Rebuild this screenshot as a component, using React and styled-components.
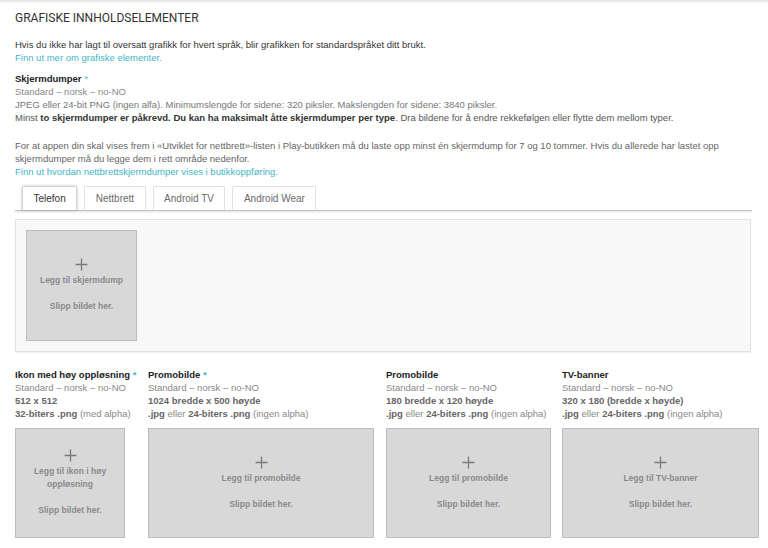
import React from "react";
import styled, { createGlobalStyle } from "styled-components";

const Global = createGlobalStyle`
  html, body { margin: 0; padding: 0; background: #fff; }
  body { font-family: "Liberation Sans", Arial, sans-serif; font-size: 9.5px; line-height: 13px; color: #333; }
  * { box-sizing: border-box; }
`;

const TopShade = styled.div`
  height: 4px;
  background: linear-gradient(#e6e6e6, #ffffff);
`;

const Page = styled.div`
  padding: 0 0 0 15px;
  width: 768px;
  height: 544px;
  overflow: hidden;
`;

const Title = styled.h2`
  margin: 6px 0 11.5px;
  font-family: Roboto, "Liberation Sans", sans-serif;
  font-weight: 400;
  font-size: 12px;
  line-height: 16px;
  color: #333;
  text-transform: uppercase;
`;

const Para = styled.p`
  margin: ${(p) => p.$mt || 0}px 0 0;
  color: ${(p) => p.$color || "#333"};
`;

const Line = styled.span`
  display: block;
  color: ${(p) => p.$color || "inherit"};
`;

const Link = styled.a`
  display: block;
  color: #3fb5c6;
  text-decoration: none;
`;

const Strong = styled.b`
  font-weight: 700;
  color: ${(p) => p.$color || "#333"};
`;

const Req = styled.span`
  color: #4ab8c8;
`;

const Tabs = styled.div`
  display: flex;
  gap: 7px;
  padding-left: 7px;
  margin-top: 8.5px;
  position: relative;
  z-index: 1;
`;

const Tab = styled.div`
  height: 24px;
  padding: 0 10.5px;
  display: flex;
  align-items: center;
  font-size: 10px;
  background: #fff;
  border: 1px solid ${(p) => (p.$active ? "#d4d4d4" : "#e0e0e0")};
  border-bottom: none;
  border-radius: 2px 2px 0 0;
  color: ${(p) => (p.$active ? "#333" : "#6a6a6a")};
  box-shadow: ${(p) => (p.$active ? "0 0 3px rgba(0,0,0,0.25)" : "none")};
`;

const TabRule = styled.div`
  width: 737px;
  height: 1px;
  background: #c4c4c4;
  box-shadow: 0 1px 2px rgba(0, 0, 0, 0.18);
`;

const Panel = styled.div`
  margin-top: 8px;
  width: 736px;
  height: 133px;
  padding: 10px;
  background: #f8f8f8;
  border: 1px solid #e2e2e2;
  box-shadow: 0 1px 1px rgba(0, 0, 0, 0.05);
`;

const Drop = styled.div`
  width: ${(p) => p.$w}px;
  height: ${(p) => p.$h}px;
  background: #d8d8d8;
  border: 1px solid #bcbcbc;
  display: flex;
  flex-direction: column;
  align-items: center;
  justify-content: center;
  text-align: center;
  font-weight: 700;
  font-size: 8.5px;
  line-height: 13px;
  color: #8a8a8a;
  padding: 0 12px;
`;

const DropLabel = styled.div`
  margin-top: 3px;
`;

const DropHint = styled.div`
  margin-top: 13px;
`;

const PlusIcon = () => (
  <svg width="13" height="13" viewBox="0 0 13 13">
    <path d="M6.5 0.5v12M0.5 6.5h12" stroke="#7a7a7a" strokeWidth="1.3" fill="none" />
  </svg>
);

const Upload = ({ w, h, label }) => (
  <Drop $w={w} $h={h}>
    <PlusIcon />
    <DropLabel>{label}</DropLabel>
    <DropHint>Slipp bildet her.</DropHint>
  </Drop>
);

const Assets = styled.div`
  display: flex;
  gap: 11px;
  margin-top: 15.5px;
`;

const Asset = styled.div`
  width: ${(p) => p.$w}px;
  flex: none;
`;

const AssetTitle = styled.div`
  font-weight: 700;
  color: #222;
`;

const Meta = styled.div`
  color: ${(p) => p.$color || "#888"};
  font-weight: ${(p) => (p.$bold ? 700 : 400)};
  white-space: nowrap;
`;

const AssetDrop = styled.div`
  margin-top: 8.5px;
`;

const assets = [
  { w: 122, title: "Ikon med høy oppløsning", req: true, size: "512 x 512", box: 110, label: "Legg til ikon i høy oppløsning" },
  { w: 227, title: "Promobilde", req: true, size: "1024 bredde x 500 høyde", box: 226, label: "Legg til promobilde" },
  { w: 165, title: "Promobilde", req: false, size: "180 bredde x 120 høyde", box: 165, label: "Legg til promobilde" },
  { w: 197, title: "TV-banner", req: false, size: "320 x 180 (bredde x høyde)", box: 197, label: "Legg til TV-banner" },
];

export default function App() {
  return (
    <>
      <Global />
      <TopShade />
      <Page>
        <Title>Grafiske innholdselementer</Title>
        <Para>
          <Line>Hvis du ikke har lagt til oversatt grafikk for hvert språk, blir grafikken for standardspråket ditt brukt.</Line>
          <Link href="#">Finn ut mer om grafiske elementer.</Link>
        </Para>
        <Para $mt={8}>
          <Line>
            <Strong $color="#222">Skjermdumper</Strong> <Req>*</Req>
          </Line>
          <Line $color="#888">Standard – norsk – no-NO</Line>
          <Line $color="#777">JPEG eller 24-bit PNG (ingen alfa). Minimumslengde for sidene: 320 piksler. Makslengden for sidene: 3840 piksler.</Line>
          <Line $color="#555">
            Minst <Strong>to skjermdumper er påkrevd. Du kan ha maksimalt åtte skjermdumper per type</Strong>. Dra bildene for å endre rekkefølgen eller flytte dem mellom typer.
          </Line>
        </Para>
        <Para $mt={15} $color="#666">
          <Line>For at appen din skal vises frem i «Utviklet for nettbrett»-listen i Play-butikken må du laste opp minst én skjermdump for 7 og 10 tommer. Hvis du allerede har lastet opp</Line>
          <Line>skjermdumper må du legge dem i rett område nedenfor.</Line>
          <Link href="#">Finn ut hvordan nettbrettskjermdumper vises i butikkoppføring.</Link>
        </Para>
        <Tabs>
          <Tab $active>Telefon</Tab>
          <Tab>Nettbrett</Tab>
          <Tab>Android TV</Tab>
          <Tab>Android Wear</Tab>
        </Tabs>
        <TabRule />
        <Panel>
          <Upload w={111} h={111} label="Legg til skjermdump" />
        </Panel>
        <Assets>
          {assets.map((a, i) => (
            <Asset key={i} $w={a.w}>
              <AssetTitle>
                {a.title}
                {a.req && <Req> *</Req>}
              </AssetTitle>
              <Meta>Standard – norsk – no-NO</Meta>
              <Meta $bold $color="#666">{a.size}</Meta>
              {i === 0 ? (
                <Meta>
                  <Strong $color="#666">32-biters .png</Strong> (med alpha)
                </Meta>
              ) : (
                <Meta>
                  <Strong $color="#666">.jpg</Strong> eller <Strong $color="#666">24-biters .png</Strong> (ingen alpha)
                </Meta>
              )}
              <AssetDrop>
                <Upload w={a.box} h={110} label={a.label} />
              </AssetDrop>
            </Asset>
          ))}
        </Assets>
      </Page>
    </>
  );
}
